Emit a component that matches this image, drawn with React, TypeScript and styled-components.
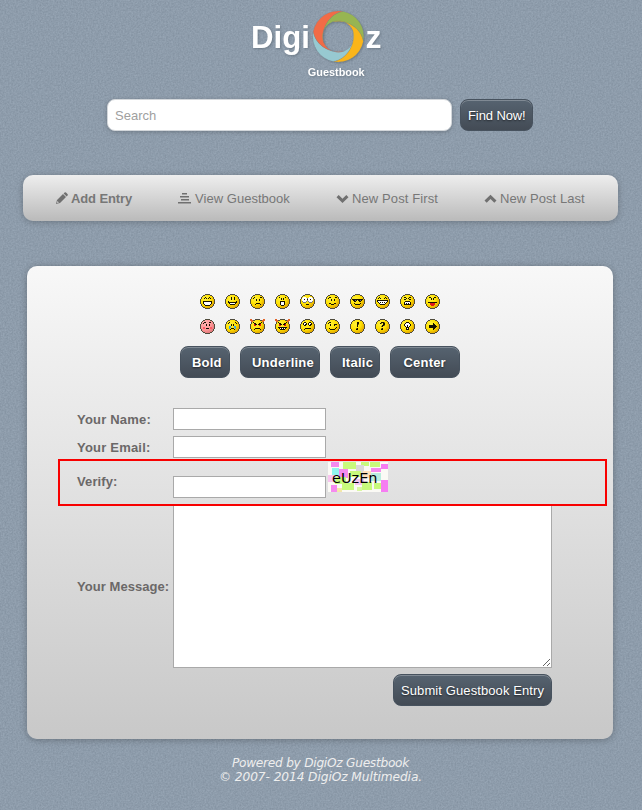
import React from "react";
import styled, { createGlobalStyle } from "styled-components";

const grain =
  "<svg xmlns='http://www.w3.org/2000/svg' width='200' height='200'><filter id='n' x='0' y='0' width='100%' height='100%' color-interpolation-filters='sRGB'><feTurbulence type='fractalNoise' baseFrequency='0.6' numOctaves='2' seed='4' stitchTiles='stitch'/><feColorMatrix values='0.14 0 0 0 0.487 0.14 0 0 0 0.543 0.14 0 0 0 0.602 0 0 0 0 1'/></filter><rect width='200' height='200' filter='url(#n)' opacity='0.8'/></svg>";

const GlobalStyle = createGlobalStyle`
  * { box-sizing: border-box; }
  body {
    margin: 0;
    background: #8e9cab url("data:image/svg+xml,${encodeURIComponent(grain).replace(/'/g, "%27")}");
    font: 13px/15px "Liberation Sans", Arial, sans-serif;
    color: #777;
  }
`;

const Page = styled.div`
  width: 642px;
  height: 810px;
  overflow: hidden;
`;

const Logo = styled.svg`
  display: block;
  width: 642px;
  height: 99px;
`;

const LogoMark = styled.g`
  fill: #fff;
  font-family: "Liberation Sans", Arial, sans-serif;
  font-weight: bold;
  filter: drop-shadow(1px 1px 1px rgba(50, 60, 70, 0.35));
`;

const SearchForm = styled.form`
  display: flex;
  gap: 8px;
  margin-left: 107px;
`;

const SearchInput = styled.input`
  width: 345px;
  height: 32px;
  padding: 0 7px;
  border: 1px solid #d3d7db;
  border-radius: 8px;
  background: #fff;
  box-shadow: 0 1px 4px rgba(0, 0, 0, 0.22);
  font: 13px "Liberation Sans", Arial, sans-serif;
  &::placeholder { color: #a0a0a0; opacity: 1; }
`;

const Button = styled.button<{ $width: number; $bold?: boolean; $inset?: number; $tracking?: number }>`
  width: ${(p) => p.$width}px;
  height: 32px;
  padding: 0 0 0 ${(p) => p.$inset ?? 7}px;
  border: 1px solid #47525e;
  border-radius: 8px;
  background: linear-gradient(#566370, #434b55);
  box-shadow: inset 0 1px 0 rgba(255, 255, 255, 0.25);
  color: #fff;
  font: ${(p) => (p.$bold ? "bold" : "normal")} 13px "Liberation Sans", Arial, sans-serif;
  letter-spacing: ${(p) => p.$tracking ?? 0}px;
  text-align: left;
  white-space: nowrap;
  text-shadow: 0 1px 2px rgba(0, 0, 0, 0.6);
`;

const Nav = styled.nav`
  display: flex;
  align-items: center;
  gap: 46px;
  width: 595px;
  height: 46px;
  margin: 44px 0 45px 23px;
  padding-left: 32px;
  border-radius: 10px;
  background: linear-gradient(#eee, #bababa);
  box-shadow: 0 1px 6px rgba(0, 0, 0, 0.25);
`;

const NavItem = styled.a<{ $active?: boolean; $tracking: number; $gap: number }>`
  display: flex;
  align-items: center;
  gap: ${(p) => p.$gap}px;
  font-weight: ${(p) => (p.$active ? "bold" : "normal")};
  letter-spacing: ${(p) => p.$tracking}px;
  white-space: nowrap;
`;

const NavIcon = styled.svg`
  width: 13px;
  height: 13px;
  fill: #707070;
`;

const Panel = styled.main`
  display: flex;
  flex-direction: column;
  width: 586px;
  height: 473px;
  margin-left: 27px;
  padding-top: 28px;
  border-radius: 10px;
  background: linear-gradient(#f8f8f8, #c8c8c8);
  box-shadow: 0 1px 7px rgba(0, 0, 0, 0.28);
`;

const Smileys = styled.div`
  display: grid;
  grid-template-columns: repeat(10, 15px);
  gap: 10px;
  margin-left: 173px;
`;

const SmileyIcon = styled.svg`
  display: block;
  width: 15px;
  height: 15px;
`;

const FormatBar = styled.div`
  display: flex;
  gap: 10px;
  margin: 12px 0 30px 153px;
`;

const Row = styled.div<{ $height: number }>`
  display: grid;
  grid-template-columns: 96px auto;
  align-items: center;
  justify-content: start;
  height: ${(p) => p.$height}px;
  margin: 0 0 6px 50px;
`;

const VerifyRow = styled(Row)`
  grid-template-columns: 96px 153px 60px;
  width: 549px;
  margin: -5px 0 0 31px;
  padding-left: 17px;
  border: 2px solid #f80000;
`;

const Label = styled.label<{ $tracking?: number; $lift?: number }>`
  padding-bottom: ${(p) => p.$lift ?? 0}px;
  font-weight: bold;
  letter-spacing: ${(p) => p.$tracking ?? 0.2}px;
  color: #6b6868;
  white-space: nowrap;
`;

const Field = styled.input`
  width: 153px;
  height: 22px;
  border: 1px solid #a9a9a9;
  background: #fff;
`;

const VerifyField = styled(Field)`
  align-self: end;
  margin-bottom: 6px;
`;

const Captcha = styled.svg`
  align-self: start;
  width: 60px;
  height: 30px;
  margin: 1px 0 0 2px;
`;

const Message = styled.textarea`
  display: block;
  width: 379px;
  height: 162px;
  border: 1px solid #a9a9a9;
  border-top: 0;
  background: #fff;
  resize: both;
`;

const Actions = styled.div`
  display: flex;
  justify-content: flex-end;
  margin-right: 61px;
`;

const Footer = styled.footer`
  margin-top: 17px;
  color: #eee;
  font: italic 12.2px/14px "DejaVu Sans", Verdana, sans-serif;
  text-align: center;
`;

const FooterLine = styled.div<{ $tracking: number }>`
  margin-right: 1px;
  letter-spacing: ${(p) => p.$tracking}px;
`;

// Left edge of each row of the round badge; the right edge mirrors it.
const edge = [5, 3, 2, 1, 1, 0, 0, 0, 0, 0, 1, 1, 2, 3, 5];

const inks: Record<string, string> = {
  k: "#161000", w: "#fff", r: "#e01818", b: "#38a8e8", g: "#8a7800", p: "#ff5a65", d: "#77777a",
};

// Eleven columns by nine rows, placed at (2, 3) on the badge.
const faces: string[][] = [
  ["...k...k...", "..k.k.k.k..", "...........", "...........", ".kkkkkkkkk.", ".kwwwwwwwk.", ".kwwwwwwwk.", "..kwwwwwk..", "...kkkkk..."],
  ["....k..k...", "....k..k...", "....k..k...", "...........", ".k.......k.", ".kkkkkkkkk.", "..kwwwwwk..", "...kkkkk...", "..........."],
  ["..k.....kk.", ".k.........", "....k..k...", "....k..k...", "...........", "...........", "....kkkk...", "...k....k..", "..........."],
  ["..k.....k..", "....k.k....", "....k.k....", "...........", "...kkkkk...", "...kwwwk...", "...kwwwk...", "...kwwwk...", "....kkk...."],
  [".www...www.", "wwwwwdwwwww", "wwkwwkwwkww", "wwwwwdwwwww", "dwwwd.dwwwd", ".ddd...ddd.", "...........", "....kkk....", "..........."],
  ["..kk....kk.", ".k.........", "....k..k...", "....k..k...", "...........", "...........", "..kk...kk..", "....kkk....", "..........."],
  ["...........", "...........", "kkkkkkkkkkk", ".kkdk.kkdk.", "..kk...kk..", "...........", "..k.....k..", "...kkkkk...", "..........."],
  ["..k.....k..", ".k.k...k.k.", "...........", "kkkkkkkkkkk", "kwwwwwwwwwk", ".kwkwkwkwk.", "..kwwwwwk..", "...kkkkk...", "..........."],
  ["..kk...kk..", "....k.k....", "..kk...kk..", "...........", "...kkkkk...", "..kwwwwwk..", "..kwkwkwk..", "..kkkkkkk..", "..........."],
  ["..kk...kk..", "....k.k....", "....k.k....", "...........", "...........", ".kkkkkkkkk.", "...rrrrr...", "...rrrrr...", "....rrr...."],
  ["..kk...kk..", ".k.........", "....k..k...", "....k..k...", "...........", ".pp.....pp.", ".pp.kkk.pp.", "...........", "..........."],
  ["..k.....k..", ".k.......k.", "....k.k....", "....k.k....", "..bb...bb..", "..bb...bb..", "..b.kkk.b..", "...k...k...", "..........."],
  [".k.......k.", "..kk...kk..", "..rkk.kkr..", "..rr...rr..", "...........", "...........", "...kkkkk...", "..k.....k..", "..........."],
  [".k.......k.", "..kk...kk..", "..rkk.kkr..", "..rr...rr..", "...........", ".kkkkkkkkk.", "..kwkwkwk..", "...kkkkk...", "..........."],
  ["..kk...kk..", ".kwwk.kwwk.", ".kwkk.kwkk.", "..kk...kk..", "...........", "...........", "...kkkkkk..", "..k........", "..........."],
  ["..kk.......", ".k.........", "...k...kkk.", "...k...k...", "...........", ".........k.", "..k.....k..", "...kkkkk...", "..........."],
  [".....kk....", ".....kk....", ".....kg....", ".....k.....", ".....k.....", "...........", "....gk.....", "....kk.....", "..........."],
  ["....kkkg...", "...kg.kk...", "......kk...", ".....kkg...", "....gk.....", "...........", "....gk.....", "....kk.....", "..........."],
  ["....kkk....", "...kwwwk...", "..kwwwwwk..", "..kwwkwwk..", "...kwkwk...", "....kkk....", "....kwk....", "....kkk....", "..........."],
  ["...........", "......k....", "......kk...", "..kkkkkkk..", "..kkkkkkkk.", "..kkkkkkk..", "......kk...", "......k....", "..........."],
];

function Smiley({ face, index }: { face: string[]; index: number }) {
  const pink = index === 10;
  const horned = index === 12 || index === 13;
  const id = `skin${index}`;
  return (
    <SmileyIcon viewBox="0 0 15 15" shapeRendering="crispEdges">
      <defs>
        <radialGradient id={id} gradientUnits="userSpaceOnUse" cx="5.5" cy="5" r="9.5">
          <stop offset="0" stopColor={pink ? "#ffb0ae" : "#fff23c"} />
          <stop offset="0.6" stopColor={pink ? "#ff9898" : "#ffe000"} />
          <stop offset="1" stopColor={pink ? "#e07a7c" : "#e2a800"} />
        </radialGradient>
      </defs>
      {edge.map((x, y) => (
        <rect key={y} x={x} y={y} width={15 - 2 * x} height="1" fill="#504c3c" />
      ))}
      {edge.slice(1, 14).map((_, i) => {
        const y = i + 1;
        const x = Math.max(edge[y - 1], edge[y + 1], edge[y] + 1);
        return <rect key={y} x={x} y={y} width={15 - 2 * x} height="1" fill={`url(#${id})`} />;
      })}
      {horned && <path d="M0 0h2v1h1v2H1V2H0zM13 0h2v2h-1v1h-2V1h1z" fill="#e26428" />}
      {face.flatMap((line, y) =>
        [...line].map((c, x) =>
          c === "." ? null : <rect key={`${x}-${y}`} x={x + 2} y={y + 3} width="1" height="1" fill={inks[c]} />
        )
      )}
    </SmileyIcon>
  );
}

// One blade of the ring: outer rim for a quarter turn, then a tail along the hole.
const crescent = "M5-25A25.5 25.5 0 0 0-25-5C-23 9-7 18 6 14.6A15.8 15.8 0 0 1-14.6 6C-18-7-9-23 5-25Z";
const ring = [
  { turn: 270, color: "#97c9d1" },
  { turn: 0, color: "#f26b46" },
  { turn: 90, color: "#97b552" },
  { turn: 180, color: "#fab51a" },
];

const patches: [number, number, number, number, string][] = [
  [3, 0, 8, 5, "#f58aef"], [15, 0, 13, 7, "#c8fa7c"], [33, 0, 8, 4, "#c8fa7c"], [42, 0, 10, 5, "#c8fa7c"],
  [53, 2, 7, 5, "#f67df2"], [4, 6, 7, 7, "#91f5ee"], [11, 7, 9, 9, "#f58aef"], [28, 3, 8, 8, "#dad9d9"],
  [43, 6, 10, 4, "#f58aef"], [22, 9, 11, 6, "#c8fa7c"], [0, 13, 7, 7, "#f8c5ef"], [7, 15, 11, 7, "#c8fa7c"],
  [35, 9, 8, 7, "#ffe0ba"], [43, 11, 10, 8, "#b9eddf"], [53, 18, 7, 12, "#f67df2"], [3, 23, 6, 7, "#f58aef"],
  [14, 21, 12, 7, "#c8fa7c"], [27, 17, 9, 6, "#f6c3ec"], [34, 20, 10, 8, "#c8fa7c"], [46, 21, 7, 6, "#c8fa7c"],
  [29, 25, 5, 4, "#d9f7a4"], [9, 26, 5, 4, "#f3e8aa"],
];

const navItems = [
  { text: "Add Entry", gap: 3, tracking: -0.12, icon: <path d="M1 12l1-4 6-6 3 3-6 6zM8.6 1.4l1-1q.7-.5 1.4.1L12.5 2q.7.7.1 1.4l-1 1zM2.4 9l-.4 2 2-.5z" fillRule="evenodd" /> },
  { text: "View Guestbook", gap: 4, tracking: 0.03, icon: <path d="M4 1h5v1.5H4zM2 4h9v1.5H2zM3 7h8v1.5H3zM0 10h13v1.5H0z" /> },
  { text: "New Post First", gap: 3, tracking: 0.12, icon: <path d="M.5 5.2l2.2-2.1 3.8 3.7 3.8-3.7 2.2 2.1-6 5.8z" /> },
  { text: "New Post Last", gap: 3, tracking: 0.06, icon: <path d="M.5 8.6l2.2 2.1L6.5 7l3.8 3.7 2.2-2.1-6-5.8z" /> },
];

const formats = [
  { text: "Bold", width: 50, inset: 11, tracking: 0.15 },
  { text: "Underline", width: 80, inset: 11, tracking: 0.22 },
  { text: "Italic", width: 50, inset: 11, tracking: 0.25 },
  { text: "Center", width: 70, inset: 12.5, tracking: 0.2 },
];

export default function App() {
  return (
    <Page>
      <GlobalStyle />
      <Logo viewBox="0 0 642 99">
        <LogoMark>
          <text x="251" y="48" fontSize="31.2">Digi</text>
          <text x="365.4" y="48" fontSize="32">z</text>
          <text x="307.8" y="76" fontSize="10.9">Guestbook</text>
          <g transform="translate(338.3 36.5)">
            {ring.map((r) => (
              <path key={r.turn} d={crescent} fill={r.color} stroke="#71808a" strokeOpacity=".35" strokeWidth=".5" transform={`rotate(${r.turn})`} />
            ))}
          </g>
        </LogoMark>
      </Logo>
      <SearchForm>
        <SearchInput placeholder="Search" />
        <Button type="button" $width={73} $tracking={-0.1}>Find Now!</Button>
      </SearchForm>
      <Nav>
        {navItems.map((item, i) => (
          <NavItem key={item.text} $active={i === 0} $gap={item.gap} $tracking={item.tracking}>
            <NavIcon viewBox="0 0 13 13">{item.icon}</NavIcon>
            {item.text}
          </NavItem>
        ))}
      </Nav>
      <Panel>
        <Smileys>
          {faces.map((face, i) => <Smiley key={i} face={face} index={i} />)}
        </Smileys>
        <FormatBar>
          {formats.map((f) => (
            <Button key={f.text} type="button" $bold $width={f.width} $inset={f.inset} $tracking={f.tracking}>{f.text}</Button>
          ))}
        </FormatBar>
        <Row $height={22}><Label>Your Name:</Label><Field /></Row>
        <Row $height={22}><Label>Your Email:</Label><Field /></Row>
        <VerifyRow $height={47}>
          <Label $lift={2} $tracking={0.1}>Verify:</Label>
          <VerifyField />
          <Captcha viewBox="0 0 60 30">
            <rect width="60" height="30" fill="#fbfaf5" />
            {patches.map(([x, y, w, h, c], i) => <rect key={i} x={x} y={y} width={w} height={h} fill={c} />)}
            <text x="4" y="21" fontFamily="DejaVu Sans, sans-serif" fontSize="14.5" fill="#000">eUzEn</text>
          </Captcha>
        </VerifyRow>
        <Row $height={162}><Label $lift={2} $tracking={0.05}>Your Message:</Label><Message /></Row>
        <Actions><Button type="button" $width={159} $tracking={0.1}>Submit Guestbook Entry</Button></Actions>
      </Panel>
      <Footer>
        <FooterLine $tracking={-0.27}>Powered by DigiOz Guestbook</FooterLine>
        <FooterLine $tracking={-0.08}>© 2007- 2014 DigiOz Multimedia.</FooterLine>
      </Footer>
    </Page>
  );
}
